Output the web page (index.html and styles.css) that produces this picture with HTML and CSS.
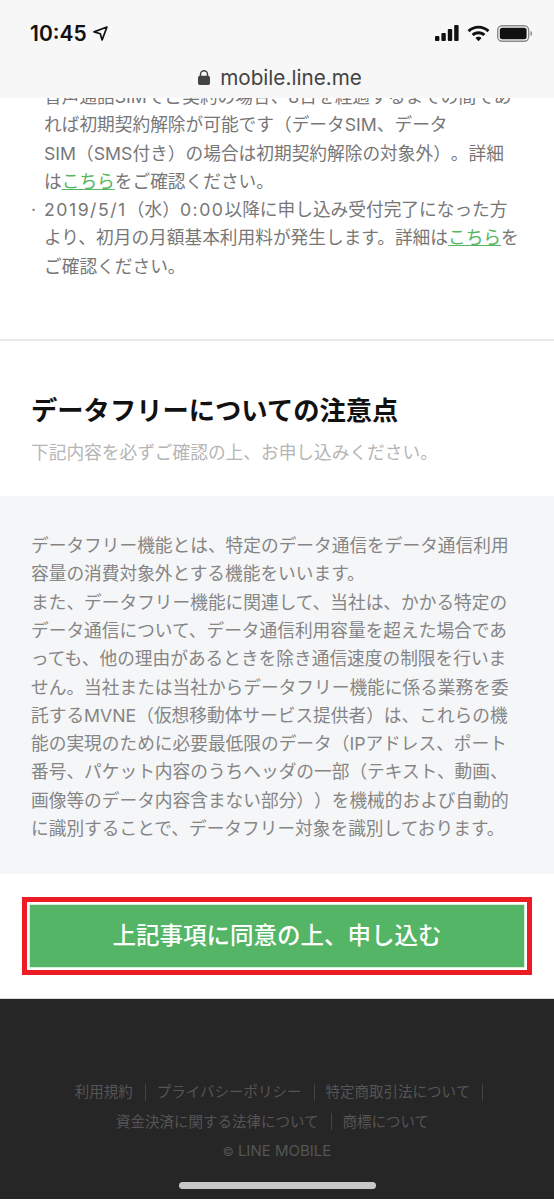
FILE: index.html
```html
<!DOCTYPE html>
<html lang="ja">
<head>
  <meta charset="UTF-8">
  <meta name="viewport" content="width=device-width, initial-scale=1.0">
  <title>LINE MOBILE</title>
  <link rel="stylesheet" href="styles.css">
</head>
<body>

  <!-- safari chrome, sits over the page -->
  <header class="chrome">
    <div class="status-bar">
      <div class="status-time">
        <span>10:45</span>
        <svg class="icon-arrow" viewBox="0 0 14 14"><path d="M13 1 1 5.500 6.800 7.200 8.500 13Z" fill="none" stroke="#111" stroke-width="1.600" stroke-linejoin="round"/></svg>
      </div>
      <div class="status-icons">
        <svg class="icon-signal" viewBox="0 0 25 16"><rect x="0" y="11" width="4.4" height="5" rx="1"/><rect x="6.4" y="8" width="4.4" height="8" rx="1"/><rect x="12.8" y="4" width="4.4" height="12" rx="1"/><rect x="19.2" y="0" width="4.4" height="16" rx="1"/></svg>
        <svg class="icon-wifi" viewBox="0 0 24 17"><path d="M12 .4C7.6.4 3.6 2.1.6 4.9l2.1 2.2C5.1 4.8 8.4 3.4 12 3.4s6.900 1.400 9.300 3.700l2.100-2.200C20.400 2.100 16.400.4 12 .4Z"/><path d="M12 6.200c-2.800 0-5.300 1.100-7.200 2.800l2.100 2.200c1.300-1.200 3.100-2 5.100-2s3.800.8 5.100 2L19.200 9C17.300 7.300 14.800 6.200 12 6.200Z"/><path d="M12 12c-1.300 0-2.400.5-3.200 1.300l3.200 3.400 3.200-3.400C14.400 12.500 13.300 12 12 12Z"/></svg>
        <svg class="icon-battery" viewBox="0 0 36 17"><rect x=".7" y=".7" width="31" height="15.600" rx="4.500" fill="none" stroke="#8a8a8a" stroke-width="1.400"/><rect x="2.800" y="2.800" width="26.800" height="11.400" rx="2.500"/><path d="M33.500 6c1 .3 1.600 1.300 1.600 2.500s-.6 2.200-1.600 2.500Z" fill="#8a8a8a"/></svg>
      </div>
    </div>
    <div class="address-bar">
      <svg class="icon-lock" viewBox="0 0 12 15"><path d="M2.500 6V4.200a3.500 3.500 0 0 1 7 0V6" fill="none" stroke="#444" stroke-width="1.500"/><rect x="0" y="5.800" width="12" height="9.200" rx="1.800" fill="#444"/></svg>
      <span>mobile.line.me</span>
    </div>
  </header>

  <main>
    <section class="notes">
      <ul class="note-list">
        <li><span class="dot">·</span><p>音声通話SIMでご契約の場合、8日を経過するまでの間であれば初期契約解除が可能です（データSIM、データ<br>SIM（SMS付き）の場合は初期契約解除の対象外）。詳細<br>は<a href="#">こちら</a>をご確認ください。</p></li>
        <li><span class="dot">·</span><p><span class="num">2019/5/1</span>（水）<span class="num">0:00</span>以降に申し込み受付完了になった方<br>より、初月の月額基本利用料が発生します。詳細は<a href="#">こちら</a>をご確認ください。</p></li>
      </ul>
    </section>

    <section class="datafree">
      <h2>データフリーについての注意点</h2>
      <p class="lead">下記内容を必ずご確認の上、お申し込みください。</p>
    </section>

    <section class="terms">
      <p>データフリー機能とは、特定のデータ通信をデータ通信利用容量の消費対象外とする機能をいいます。<br>また、データフリー機能に関連して、当社は、かかる特定のデータ通信について、データ通信利用容量を超えた場合であっても、他の理由があるときを除き通信速度の制限を行いません。当社または当社からデータフリー機能に係る業務を委託するMVNE（仮想移動体サービス提供者）は、これらの機能の実現のために必要最低限のデータ（IPアドレス、ポート番号、パケット内容のうちヘッダの一部（テキスト、動画、画像等のデータ内容含まない部分））を機械的および自動的に識別することで、データフリー対象を識別しております。</p>
    </section>

    <div class="submit-wrap">
      <a class="submit-btn" href="#"><span class="submit-label">上記事項に同意の上、申し込む</span></a>
    </div>
  </main>

  <footer class="site-footer">
    <ul class="footer-links">
      <li>利用規約</li>
      <li>プライバシーポリシー</li>
      <li>特定商取引法について</li>
      <li>資金決済に関する法律について</li>
      <li class="no-sep">商標について</li>
    </ul>
    <p class="copyright"><span class="copy-mark">©</span> LINE MOBILE</p>
    <div class="home-bar"></div>
  </footer>

</body>
</html>
```

FILE: styles.css
```css
/* Basic reset and layout */
html, body {
    margin: 0;
    padding: 0;
    background-color: #fff;
}

body {
    position: relative;
    height: 1200px;
    overflow: hidden;
    font-family: Inter, "Noto Sans CJK JP", sans-serif;
    font-size: 17.7px;
    color: #777;
    text-spacing-trim: space-all;
}

p, ul, h2 {
    margin: 0;
    padding: 0;
}

ul {
    list-style: none;
}

/* Safari chrome */
.chrome {
    position: absolute;
    top: 0;
    left: 0;
    right: 0;
    height: 98px;
    background-color: #f7f7f7;
}

.status-bar {
    display: flex;
    justify-content: space-between;
    align-items: center;
    height: 34px;
    padding: 16px 21px 0 30px;
}

.status-time {
    display: flex;
    align-items: center;
    gap: 6px;
    font-size: 21px;
    font-weight: 600;
    color: #111;
}

.icon-arrow {
    width: 15px;
    height: 15px;
}

.status-icons {
    display: flex;
    align-items: center;
    gap: 7px;
}

.icon-signal {
    width: 25px;
    height: 16px;
    fill: #111;
}

.icon-wifi {
    width: 23px;
    height: 17px;
    fill: #111;
}

.icon-battery {
    width: 36px;
    height: 17px;
    fill: #111;
}

.address-bar {
    display: flex;
    justify-content: center;
    align-items: center;
    gap: 10px;
    margin-top: 15px;
    padding-left: 6px;
    font-size: 20.7px;
    color: #444;
}

.icon-lock {
    width: 12px;
    height: 15px;
}

/* Notes list */
.notes {
    padding: 83px 31px 58px 31px;
    border-bottom: 2px solid #e9e9e9;
    line-height: 28.3px;
}

.note-list li {
    display: flex;
}

.dot {
    flex: none;
    width: 13px;
}

.num {
    letter-spacing: 1.5px;
}

.note-list a {
    color: #55b563;
    text-decoration: underline;
}

/* Data free section */
.datafree {
    padding: 52px 31px 29px;
}

.datafree h2 {
    font-size: 26.3px;
    line-height: 36px;
    font-weight: 700;
    color: #111;
}

.lead {
    margin-top: 10px;
    line-height: 28px;
    color: #b5b5b5;
}

.terms {
    padding: 36px 31px 31px;
    background-color: #f5f6f8;
    line-height: 28.3px;
    color: #858585;
}

/* Submit button */
.submit-wrap {
    padding: 23px 22px;
}

.submit-btn {
    display: block;
    padding: 2px;
    background-color: #fff;
    border: 5px solid #ed1c24;
    text-decoration: none;
}

.submit-label {
    display: block;
    height: 62px;
    line-height: 62px;
    text-align: center;
    background-color: #53b565;
    border: 1px solid #d8eedd;
    color: #fff;
    font-size: 23.5px;
    font-weight: 500;
}

/* Footer */
.site-footer {
    height: 201px;
    box-sizing: border-box;
    padding-top: 78px;
    background-color: #262626;
    color: #555;
    text-align: center;
    font-size: 14.5px;
    border-top: 1px solid #ddd;
}

.footer-links {
    display: flex;
    flex-wrap: wrap;
    justify-content: center;
    column-gap: 11px;
    padding-left: 4px;
}

.footer-links li {
    display: flex;
    align-items: center;
    gap: 12px;
    line-height: 29.5px;
}

.footer-links li::after {
    content: "";
    width: 1px;
    height: 17px;
    background-color: #444;
}

.footer-links li.no-sep::after {
    background-color: transparent;
}

.copyright {
    font-size: 15px;
    line-height: 29px;
}

.copy-mark {
    font-size: 12px;
}

.home-bar {
    width: 197px;
    height: 7px;
    margin: 16px auto 0;
    border-radius: 4px;
    background-color: #c8c8c8;
}
```
